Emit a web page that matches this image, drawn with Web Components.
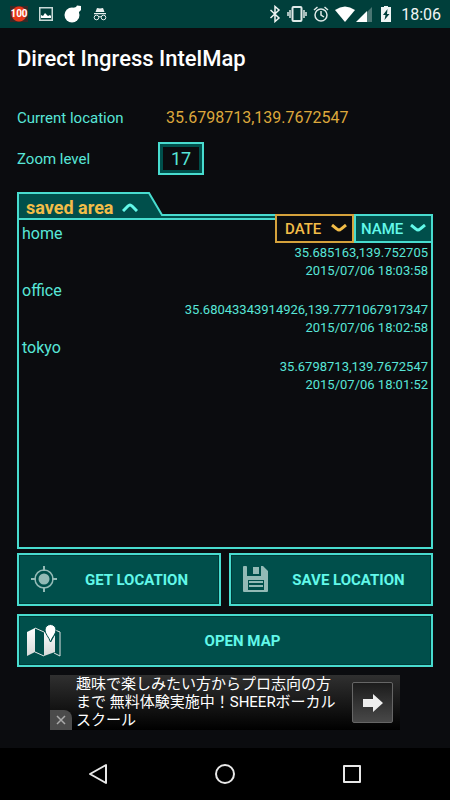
<!DOCTYPE html>
<html lang="ja">
<head>
<meta charset="utf-8">
<meta name="viewport" content="width=device-width, initial-scale=1">
<title>Direct Ingress IntelMap</title>
<style>
  html {
    --line: #48dccf;
    --cyan: #62f8e9;
    --text: #58e6d8;
    --teal: #004f4b;
    --gold: #f2bd48;
    --page: #0b0c0f;
  }
  body {
    margin: 0;
    min-height: 100vh;
    display: flex;
    flex-direction: column;
    background: var(--page);
    color: var(--text);
    font: 16px/20px Roboto, "Noto Sans CJK JP", sans-serif;
  }
  main {
    flex: 1;
    display: flex;
    flex-direction: column;
    padding: 0 17px 18px;
  }
  .actions {
    display: grid;
    grid-template-columns: 1fr 1fr;
    gap: 8px;
    margin: 4px 0 8px;
  }
  .wide {
    grid-column: 1 / -1;
  }
</style>
</head>
<body>
<status-bar time="18:06"></status-bar>
<title-bar>Direct Ingress IntelMap</title-bar>
<main>
  <location-fields location="35.6798713,139.7672547" zoom="17"></location-fields>
  <saved-area>
    <saved-place coords="35.685163,139.752705" date="2015/07/06 18:03:58">home</saved-place>
    <saved-place coords="35.68043343914926,139.7771067917347" date="2015/07/06 18:02:58">office</saved-place>
    <saved-place coords="35.6798713,139.7672547" date="2015/07/06 18:01:52">tokyo</saved-place>
  </saved-area>
  <div class="actions">
    <action-button>
      <svg slot="icon" width="35" height="36" viewBox="0 0 35 36" fill="none" stroke="#93bab6" stroke-width="1.500">
        <circle cx="17" cy="17" r="9"/>
        <circle cx="17" cy="17" r="5.500" fill="#93bab6" stroke="none"/>
        <path stroke-width="2" d="M17 4v5M17 25v5M4 17h5M25 17h5"/>
      </svg>
      GET LOCATION
    </action-button>
    <action-button>
      <svg slot="icon" width="35" height="36" viewBox="0 0 35 36">
        <path fill="#93bab6" fill-rule="evenodd" d="M5 4h2a1 1 0 0 1 1 1v9h14V4h2l5 5v20a1 1 0 0 1-1 1H5a1 1 0 0 1-1-1V5a1 1 0 0 1 1-1zM9 18v10h16V18z"/>
        <path fill="#93bab6" d="M14 5h6v7h-6zM10 19h14v2H10zM10 23h14v2H10z"/>
      </svg>
      SAVE LOCATION
    </action-button>
    <action-button class="wide">
      <svg slot="icon" width="35" height="36" viewBox="0 0 35 36">
        <defs>
          <linearGradient id="paper" x2="0" y2="1">
            <stop stop-color="#fff"/>
            <stop offset="1" stop-color="#d6d9d8"/>
          </linearGradient>
        </defs>
        <path fill="url(#paper)" d="M0 9l8-4v24l-8 4zM17 9l3 1 4 9 4-7v17l-11 4z"/>
        <path fill="none" stroke="#e2e6e5" d="M8 5l9 4M8 29l9 4M28 7l5 2v24l-6-3"/>
        <path fill="#fff" stroke="#004f4b" d="M23.500 19C22 14 18 11 18 7a5.500 5.500 0 0 1 11 0C29 11 25 14 23.500 19z"/>
      </svg>
      OPEN MAP
    </action-button>
  </div>
  <ad-banner href="#ad">趣味で楽しみたい方からプロ志向の方<br>まで 無料体験実施中！SHEERボーカル<br>スクール</ad-banner>
</main>
<nav-bar></nav-bar>

<script>
class StatusBar extends HTMLElement {
  constructor() {
    super();
    this.attachShadow({ mode: 'open' });
  }

  connectedCallback() {
    this.shadowRoot.innerHTML = `
      <style>
        :host {
          display: flex;
          align-items: center;
          justify-content: space-between;
          height: 28px;
          padding: 0 9px 0 10px;
          background: #003f3b;
          color: #f0f5f4;
        }
        div {
          display: flex;
          align-items: center;
        }
        .left {
          gap: 10px;
        }
        .right {
          gap: 6px;
        }
        svg {
          display: block;
        }
        .badge {
          display: grid;
          place-items: center;
          width: 18px;
          height: 16px;
          background: radial-gradient(circle, #e8381a 7px, #3a2a28 8px);
          color: #fff;
          font: bold 10px/16px Roboto, sans-serif;
        }
        time {
          padding-top: 2px;
          margin-left: 1px;
        }
      </style>
      <div class="left">
        <span class="badge">100</span>
        <svg width="16" height="16" viewBox="0 0 16 16">
          <path fill="none" stroke="#c9dad8" stroke-width="1.500" d="M1.750 1.750h12.500v12.500H1.750z"/>
          <path fill="#fff" d="M3 12V9l2 1 2-3 3 3 2-1 1 1v2z"/>
        </svg>
        <svg width="18" height="18" viewBox="0 0 18 18" fill="#fff">
          <circle cx="8" cy="10" r="7.500"/>
          <path d="M9 3l3-1 1-1.500 4 .5v4L15 7l-1 4z"/>
        </svg>
        <svg width="16" height="16" viewBox="0 0 16 16" fill="#e9efee">
          <path d="M5 2l3 .5L11 2l1.500 4h-9zM2 7h12v1.300H2z"/>
          <g fill="none" stroke="#e9efee">
            <circle cx="4.500" cy="11.500" r="2.300"/>
            <circle cx="11.500" cy="11.500" r="2.300"/>
            <path d="M6.800 11q1.200-.8 2.400 0"/>
          </g>
        </svg>
      </div>
      <div class="right">
        <svg width="12" height="18" viewBox="0 0 12 18" fill="none" stroke="#f0f5f4" stroke-width="1.500">
          <path d="M1.500 5l8.500 8-4 3.500v-15L10 5l-8.500 8"/>
        </svg>
        <svg width="20" height="18" viewBox="0 0 20 18" fill="none" stroke="#dfeae8" stroke-width="1.500">
          <rect x="5.500" y="2" width="9" height="14" rx="1" stroke-width="2"/>
          <path d="M3 5v8M1 7v4M17 5v8M19 7v4"/>
        </svg>
        <svg width="16" height="18" viewBox="0 0 16 18" fill="none" stroke="#dfeae8" stroke-width="1.500">
          <circle cx="8" cy="10" r="6"/>
          <path d="M8 6v4l3 2M1 5l3.500-3M15 5l-3.500-3"/>
        </svg>
        <svg width="37" height="18" viewBox="0 0 37 18" fill="#fff">
          <path d="M0 5Q10-2 20 5L10 17z"/>
          <path fill="#4a7673" d="M37 2v15h-5V7z"/>
          <path d="M32 6v11H21z"/>
        </svg>
        <svg width="16" height="18" viewBox="0 0 16 18">
          <path fill="#f0f5f4" d="M6 1h4v1h3v15H3V2h3z"/>
          <path fill="#003f3b" d="M9.500 4L5 10h2.500l-1 5L11.500 9H9z"/>
        </svg>
        <time>${this.getAttribute('time')}</time>
      </div>
    `;
  }
}

class TitleBar extends HTMLElement {
  constructor() {
    super();
    this.attachShadow({ mode: 'open' });
    this.shadowRoot.innerHTML = `
      <style>
        :host {
          display: block;
          padding: 16px 17px;
        }
        h1 {
          margin: 0;
          color: #fff;
          font-size: 22px;
          font-weight: 500;
          line-height: 30px;
        }
      </style>
      <h1><slot></slot></h1>
    `;
  }
}

class LocationFields extends HTMLElement {
  constructor() {
    super();
    this.attachShadow({ mode: 'open' });
  }

  connectedCallback() {
    this.shadowRoot.innerHTML = `
      <style>
        :host {
          display: grid;
          grid-template-columns: 141px 1fr;
          grid-template-rows: 48px 33px;
          align-items: center;
          padding-top: 4px;
          margin-bottom: 17px;
        }
        label {
          font-size: 15px;
        }
        output {
          padding-left: 8px;
          color: #dda83c;
        }
        input {
          box-sizing: border-box;
          width: 46px;
          height: 33px;
          margin: 0;
          padding: 0;
          border: 2px solid var(--line);
          border-radius: 0;
          background: var(--page);
          box-shadow: inset 0 0 0 3px var(--teal);
          color: var(--text);
          font: 18px Roboto, sans-serif;
          text-align: center;
        }
      </style>
      <label for="location">Current location</label>
      <output id="location">${this.getAttribute('location')}</output>
      <label for="zoom">Zoom level</label>
      <input id="zoom" type="text" inputmode="numeric" value="${this.getAttribute('zoom')}">
    `;
  }
}

class SavedArea extends HTMLElement {
  constructor() {
    super();
    this.attachShadow({ mode: 'open' });
    this.shadowRoot.innerHTML = `
      <style>
        :host {
          flex: 1;
          display: flex;
          flex-direction: column;
          position: relative;
        }
        button {
          margin: 0;
          border: 0;
          background: none;
          font: 500 15px/20px Roboto, sans-serif;
          cursor: pointer;
        }
        header {
          display: flex;
          align-items: flex-end;
        }
        .tab {
          display: grid;
          width: 146px;
          height: 28px;
          padding: 0;
          color: var(--gold);
          font-size: 18px;
          font-weight: bold;
        }
        .tab > * {
          grid-area: 1 / 1;
        }
        .tab span {
          display: flex;
          align-items: center;
          gap: 8px;
          padding: 3px 0 0 9px;
        }
        .rail {
          flex: 1;
          box-sizing: border-box;
          height: 6px;
          border: solid var(--line);
          border-width: 2px 2px 2px 0;
          background: var(--teal);
        }
        .list {
          flex: 1;
          padding: 4px 3px 0;
          border: solid var(--line);
          border-width: 0 2px 2px;
        }
        .sort {
          position: absolute;
          top: 22px;
          right: 0;
          display: flex;
        }
        .sort button {
          display: flex;
          align-items: center;
          justify-content: space-between;
          box-sizing: border-box;
          width: 79px;
          height: 29px;
          padding: 0 5px;
          border: 2px solid var(--line);
          background: var(--teal);
          color: var(--cyan);
        }
        .sort .active {
          padding-left: 8px;
          border-color: #d5a23c;
          background: var(--page);
          color: var(--gold);
        }
        svg {
          display: block;
          fill: none;
        }
        .arrow {
          stroke: currentColor;
          stroke-width: 3;
        }
        .up {
          color: var(--cyan);
        }
      </style>
      <header>
        <button class="tab" type="button" aria-expanded="true">
          <svg width="146" height="28" viewBox="0 0 146 28">
            <path fill="#004f4b" d="M1 1h131l13 22h1v4H1z"/>
            <path stroke="#48dccf" stroke-width="2" d="M1 28V1h131l13 22h1M0 27h146"/>
          </svg>
          <span>saved area
            <svg class="arrow up" width="16" height="9" viewBox="0 0 16 9"><path d="M1 8l5-5q2-2 4 0l5 5"/></svg>
          </span>
        </button>
        <div class="rail"></div>
      </header>
      <div class="list"><slot></slot></div>
      <div class="sort">
        <button class="active" type="button">DATE
          <svg class="arrow" width="16" height="9" viewBox="0 0 16 9"><path d="M1 1l5 4q2 2 4 0l5-4"/></svg>
        </button>
        <button type="button">NAME
          <svg class="arrow" width="16" height="9" viewBox="0 0 16 9"><path d="M1 1l5 4q2 2 4 0l5-4"/></svg>
        </button>
      </div>
    `;
  }
}

class SavedPlace extends HTMLElement {
  constructor() {
    super();
    this.attachShadow({ mode: 'open' });
  }

  connectedCallback() {
    this.shadowRoot.innerHTML = `
      <style>
        :host {
          display: block;
          padding-bottom: 1px;
        }
        p {
          margin: 0;
          font-size: 13px;
          line-height: 18px;
          text-align: right;
        }
      </style>
      <slot></slot>
      <p>${this.getAttribute('coords')}</p>
      <p>${this.getAttribute('date')}</p>
    `;
  }
}

class ActionButton extends HTMLElement {
  constructor() {
    super();
    this.attachShadow({ mode: 'open' });
    this.shadowRoot.innerHTML = `
      <style>
        :host {
          display: block;
        }
        button {
          display: flex;
          align-items: center;
          box-sizing: border-box;
          width: 100%;
          height: 53px;
          margin: 0;
          padding: 0 8px;
          border: 2px solid var(--line);
          background: var(--teal);
          box-shadow: inset 0 0 0 1px #003a37;
          color: var(--cyan);
          font: bold 15px/20px Roboto, sans-serif;
          cursor: pointer;
        }
        span {
          flex: 1;
        }
      </style>
      <button type="button">
        <slot name="icon"></slot>
        <span><slot></slot></span>
      </button>
    `;
  }
}

class AdBanner extends HTMLElement {
  constructor() {
    super();
    this.attachShadow({ mode: 'open' });
  }

  connectedCallback() {
    this.shadowRoot.innerHTML = `
      <style>
        :host {
          display: block;
          position: relative;
          align-self: center;
          width: 100%;
          max-width: 350px;
        }
        a {
          display: flex;
          align-items: center;
          justify-content: space-between;
          box-sizing: border-box;
          height: 55px;
          padding: 0 7px 0 26px;
          background: linear-gradient(#303030, #000);
          color: #fff;
          font-size: 15px;
          line-height: 18px;
          text-decoration: none;
          white-space: nowrap;
        }
        .copy {
          padding-bottom: 2px;
        }
        .go {
          box-sizing: border-box;
          width: 41px;
          height: 41px;
          border: 1px solid #666;
          border-radius: 2px;
          background: linear-gradient(#1c1c1c, #484848);
        }
        svg {
          display: block;
        }
        button {
          position: absolute;
          left: 0;
          bottom: 0;
          display: grid;
          place-items: center;
          width: 22px;
          height: 20px;
          padding: 0;
          border: 0;
          border-radius: 0 8px 0 0;
          background: #4b4b4b;
        }
      </style>
      <a href="${this.getAttribute('href')}">
        <div class="copy"><slot></slot></div>
        <span class="go">
          <svg width="39" height="39" viewBox="0 0 39 39"><path fill="#eee" d="M10 16h10v-5l10 9-10 9v-5H10z"/></svg>
        </span>
      </a>
      <button type="button" aria-label="Close">
        <svg width="10" height="10" viewBox="0 0 10 10" stroke="#aaa" stroke-width="1.500"><path d="M1 1l8 8M9 1l-8 8"/></svg>
      </button>
    `;
  }
}

class NavBar extends HTMLElement {
  constructor() {
    super();
    this.attachShadow({ mode: 'open' });
    this.shadowRoot.innerHTML = `
      <style>
        :host {
          display: flex;
          align-items: center;
          justify-content: center;
          gap: 103px;
          height: 52px;
          background: #000;
        }
        button {
          padding: 0;
          border: 0;
          background: none;
        }
        svg {
          display: block;
          fill: none;
          stroke: #e8e8e8;
          stroke-width: 2;
          stroke-linejoin: round;
        }
      </style>
      <button type="button" aria-label="Back">
        <svg width="24" height="24" viewBox="0 0 24 24"><path d="M20 3v18L4 12z"/></svg>
      </button>
      <button type="button" aria-label="Home">
        <svg width="24" height="24" viewBox="0 0 24 24"><circle cx="12" cy="12" r="9"/></svg>
      </button>
      <button type="button" aria-label="Recent apps">
        <svg width="24" height="24" viewBox="0 0 24 24"><rect x="4" y="4" width="16" height="16"/></svg>
      </button>
    `;
  }
}

customElements.define('status-bar', StatusBar);
customElements.define('title-bar', TitleBar);
customElements.define('location-fields', LocationFields);
customElements.define('saved-area', SavedArea);
customElements.define('saved-place', SavedPlace);
customElements.define('action-button', ActionButton);
customElements.define('ad-banner', AdBanner);
customElements.define('nav-bar', NavBar);
</script>
</body>
</html>
